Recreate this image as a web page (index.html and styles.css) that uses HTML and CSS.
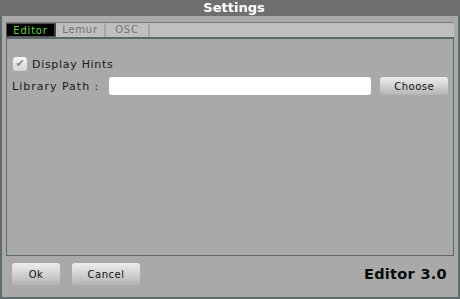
FILE: index.html
```html
<!DOCTYPE html>
<html lang="en">
<head>
  <meta charset="UTF-8">
  <title>Settings</title>
  <link rel="stylesheet" href="styles.css">
</head>
<body>

  <div class="titlebar">Settings</div>

  <div class="window">
    <!-- Tabs -->
    <div class="tabs">
      <div class="tab active">Editor</div>
      <div class="tab">Lemur</div>
      <div class="tab osc">OSC</div>
      <div class="tab-fill"></div>
    </div>

    <div class="panel">
      <label class="row hints">
        <span class="checkbox">&#10004;</span>
        <span>Display Hints</span>
      </label>
      <div class="row path">
        <span class="label">Library Path :</span>
        <div class="input"></div>
        <button class="button choose">Choose</button>
      </div>
    </div>

    <div class="footer">
      <button class="button ok">Ok</button>
      <button class="button cancel">Cancel</button>
      <div class="version">Editor 3.0</div>
    </div>
  </div>

</body>
</html>
```

FILE: styles.css
```css
* {
  margin: 0;
  padding: 0;
  box-sizing: border-box;
}

body {
  width: 460px;
  height: 299px;
  background-color: #a9a9a9;
  font-family: 'DejaVu Sans', sans-serif;
  font-size: 11px;
  color: #1a1a1a;
  overflow: hidden;
}

.titlebar {
  height: 16px;
  background-color: #6f6f6f;
  color: #fff;
  font-weight: bold;
  font-size: 13px;
  line-height: 16px;
  text-align: center;
  padding-left: 8px;
}

.window {
  height: 283px;
  border: 2px solid #5e6d6b;
  border-top: none;
  padding: 6px 4px 0 4px;
}

.tabs {
  display: flex;
  height: 15px;
  background-color: #bfbfbf;
  border-top: 1px solid #7a7a7a;
  border-radius: 0 3px 0 0;
}

.tab {
  width: 50px;
  font-size: 10px;
  line-height: 14px;
  text-align: center;
  color: #737373;
  letter-spacing: 0.8px;
  border-right: 2px solid #a8a8a8;
}

.tab.osc {
  width: 44px;
}

.tab.active {
  background-color: #000;
  color: #5edb3a;
  border: 1px solid #555;
  border-right: 2px solid #444;
}

.tab-fill {
  flex: 1;
}

.panel {
  height: 219px;
  border: 1px solid #5a6866;
  border-top: 2px solid #5a6866;
  padding: 18px 5px 0 5px;
}

.row {
  display: flex;
  align-items: center;
}

.hints {
  gap: 5px;
  padding-left: 1px;
  letter-spacing: 0.7px;
}

.checkbox {
  width: 14px;
  height: 14px;
  background: linear-gradient(#f6f6f6, #d4d4d4);
  border-radius: 3px;
  color: #8a8a8a;
  font-size: 11px;
  line-height: 14px;
  text-align: center;
  letter-spacing: 0;
}

.path {
  margin-top: 6px;
}

.label {
  width: 97px;
  letter-spacing: 1px;
}

.input {
  width: 264px;
  height: 18px;
  background-color: #fff;
  border-radius: 3px;
}

.button {
  height: 18px;
  border: none;
  border-radius: 3px;
  background: linear-gradient(#eeeeee, #b4b4b4);
  font-family: 'DejaVu Sans', sans-serif;
  font-size: 10px;
  color: #111;
  letter-spacing: 0.5px;
}

.choose {
  width: 68px;
  margin-left: 9px;
}

.footer {
  display: flex;
  align-items: center;
  padding: 7px 6px 0 6px;
}

.ok {
  width: 48px;
  height: 22px;
}

.cancel {
  width: 68px;
  height: 22px;
  margin-left: 12px;
}

.version {
  margin-left: auto;
  font-weight: bold;
  font-size: 14.5px;
  color: #0a0a0a;
  letter-spacing: 0.3px;
  padding-right: 1px;
}
```
